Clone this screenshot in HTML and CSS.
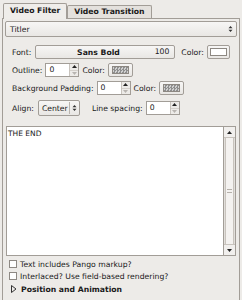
FILE: index.html
```html
<!DOCTYPE html>
<html lang="en">
<head>
    <meta charset="UTF-8">
    <title>Video Filter - Titler</title>
    <link rel="stylesheet" href="styles.css">
</head>
<body>
    <div class="tabs">
        <div class="tab active">Video Filter</div>
        <div class="tab">Video Transition</div>
    </div>

    <div class="panel">
        <div class="combo filter-combo">
            <span class="combo-text">Titler</span>
            <span class="combo-arrows">
                <svg width="5" height="8" viewBox="0 0 5 8"><path d="M0.5 3.2 L2.5 1 L4.5 3.2 Z M0.5 4.8 L2.5 7 L4.5 4.8 Z" fill="#333"/></svg>
            </span>
        </div>

        <div class="row">
            <span class="label">Font:</span>
            <div class="font-button">
                <span class="font-name">Sans Bold</span>
                <span class="font-size">100</span>
            </div>
            <span class="label color-label">Color:</span>
            <span class="swatch-btn wide-swatch"><span class="swatch white"></span></span>
        </div>

        <div class="row">
            <span class="label">Outline:</span>
            <div class="spin">
                <span class="spin-value">0</span>
                <span class="spin-buttons">
                    <span class="spin-up">
                        <svg width="5" height="3" viewBox="0 0 5 3"><path d="M0 3 L2.5 0 L5 3 Z" fill="#222"/></svg>
                    </span>
                    <span class="spin-down">
                        <svg width="5" height="3" viewBox="0 0 5 3"><path d="M0 0 L2.5 3 L5 0 Z" fill="#b8b4b0"/></svg>
                    </span>
                </span>
            </div>
            <span class="label">Color:</span>
            <span class="swatch-btn"><span class="swatch checker"></span></span>
        </div>

        <div class="row">
            <span class="label">Background Padding:</span>
            <div class="spin">
                <span class="spin-value">0</span>
                <span class="spin-buttons">
                    <span class="spin-up">
                        <svg width="5" height="3" viewBox="0 0 5 3"><path d="M0 3 L2.5 0 L5 3 Z" fill="#222"/></svg>
                    </span>
                    <span class="spin-down">
                        <svg width="5" height="3" viewBox="0 0 5 3"><path d="M0 0 L2.5 3 L5 0 Z" fill="#b8b4b0"/></svg>
                    </span>
                </span>
            </div>
            <span class="label">Color:</span>
            <span class="swatch-btn"><span class="swatch checker"></span></span>
        </div>

        <div class="row align-row">
            <span class="label">Align:</span>
            <div class="combo align-combo">
                <span class="combo-text">Center</span>
                <span class="combo-sep"></span>
                <span class="combo-arrows">
                    <svg width="5" height="8" viewBox="0 0 5 8"><path d="M0.5 3.2 L2.5 1 L4.5 3.2 Z M0.5 4.8 L2.5 7 L4.5 4.8 Z" fill="#333"/></svg>
                </span>
            </div>
            <span class="label spacing-label">Line spacing:</span>
            <div class="spin">
                <span class="spin-value">0</span>
                <span class="spin-buttons">
                    <span class="spin-up">
                        <svg width="5" height="3" viewBox="0 0 5 3"><path d="M0 3 L2.5 0 L5 3 Z" fill="#222"/></svg>
                    </span>
                    <span class="spin-down">
                        <svg width="5" height="3" viewBox="0 0 5 3"><path d="M0 0 L2.5 3 L5 0 Z" fill="#b8b4b0"/></svg>
                    </span>
                </span>
            </div>
        </div>

        <div class="text-box">
            <div class="text-content">THE END</div>
            <div class="scrollbar">
                <span class="scroll-arrow">
                    <svg width="5" height="3" viewBox="0 0 5 3"><path d="M0 3 L2.5 0 L5 3 Z" fill="#222"/></svg>
                </span>
                <span class="scroll-thumb"><span class="grip"></span></span>
                <span class="scroll-arrow">
                    <svg width="5" height="3" viewBox="0 0 5 3"><path d="M0 0 L2.5 3 L5 0 Z" fill="#222"/></svg>
                </span>
            </div>
        </div>

        <label class="check"><span class="box"></span>Text includes Pango markup?</label>
        <label class="check"><span class="box"></span>Interlaced? Use field-based rendering?</label>

        <div class="expander">
            <svg width="6" height="8" viewBox="0 0 6 8"><path d="M0.5 0.5 L5 4 L0.5 7.5 Z" fill="none" stroke="#333" stroke-width="1"/></svg>
            <span>Position and Animation</span>
        </div>
    </div>
</body>
</html>
```

FILE: styles.css
```css
* {
    margin: 0;
    padding: 0;
    box-sizing: border-box;
}

body {
    width: 242px;
    height: 300px;
    overflow: hidden;
    background-color: #edebe8;
    font-family: "DejaVu Sans", sans-serif;
    font-size: 7.7px;
    color: #1a1a1a;
}

.tabs {
    display: flex;
    align-items: flex-end;
    padding: 3px 0 0 3px;
    height: 18px;
}

.tab {
    height: 13px;
    line-height: 12px;
    padding: 0 6px;
    border: 1px solid #a29d97;
    border-bottom: none;
    border-radius: 2px 2px 0 0;
    font-weight: bold;
    background-color: #e4e1dd;
    white-space: nowrap;
}

.tab.active {
    height: 16px;
    line-height: 14px;
    padding: 0 6px;
    background-color: #efedea;
    margin-bottom: -1px;
    position: relative;
    z-index: 1;
}

.panel {
    margin: 0 2px;
    height: 282px;
    border: 1px solid #a29d97;
    border-bottom: none;
    padding: 2px 2px 0 2px;
}

.combo {
    display: flex;
    align-items: center;
    height: 16px;
    border: 1px solid #a29d97;
    border-radius: 2px;
    background: linear-gradient(#f7f6f5, #e9e7e4);
}

.combo-text {
    flex: 1;
    padding-left: 4px;
}

.combo-arrows {
    display: flex;
    align-items: center;
    padding: 0 3px;
}

.combo-sep {
    width: 1px;
    height: 12px;
    background-color: #b9b4ae;
}

.row {
    display: flex;
    align-items: center;
    gap: 3px;
    height: 14px;
    padding-left: 7px;
    margin-top: 4px;
}

.filter-combo + .row {
    margin-top: 8px;
}

.label {
    white-space: nowrap;
}

.color-label {
    margin-left: 3px;
}

.font-button {
    display: flex;
    align-items: center;
    width: 140px;
    height: 14px;
    margin-left: 1px;
    border: 1px solid #a29d97;
    border-radius: 2px;
    background: linear-gradient(#f7f6f5, #e9e7e4);
}

.font-name {
    flex: 1;
    text-align: center;
    font-weight: bold;
    padding-left: 10px;
}

.font-size {
    padding: 0 5px 0 4px;
    line-height: 12px;
}

.swatch-btn {
    display: flex;
    align-items: center;
    justify-content: center;
    width: 25px;
    height: 14px;
    border: 1px solid #a29d97;
    border-radius: 2px;
    background: linear-gradient(#f7f6f5, #e9e7e4);
}

.wide-swatch {
    width: 23px;
}

.swatch {
    width: 17px;
    height: 8px;
    border: 1px solid #8d8882;
}

.swatch.white {
    background-color: #fff;
}

.swatch.checker {
    background-color: #cfcfcf;
    background-image: conic-gradient(#8e8e8e 25%, #cfcfcf 0 50%, #8e8e8e 0 75%, #cfcfcf 0);
    background-size: 3px 3px;
}

.spin {
    display: flex;
    width: 34px;
    height: 14px;
    border: 1px solid #a29d97;
    background-color: #fff;
}

.spin-value {
    flex: 1;
    padding-left: 3px;
    line-height: 12px;
}

.spin-buttons {
    display: flex;
    flex-direction: column;
    width: 9px;
    border-left: 1px solid #c8c3bd;
    background-color: #edebe8;
}

.spin-up,
.spin-down {
    flex: 1;
    display: flex;
    align-items: center;
    justify-content: center;
}

.spin-up {
    border-bottom: 1px solid #d4d0cb;
}

.align-row {
    height: 16px;
    margin-top: 5px;
}

.align-combo {
    width: 42px;
    margin-left: 1px;
}

.align-combo .combo-text {
    padding-left: 3px;
}

.align-combo .combo-arrows {
    padding: 0 2px;
}

.spacing-label {
    margin-left: 9px;
}

.text-box {
    display: flex;
    height: 130px;
    margin: 10px 1px 0 1px;
    border: 1px solid #a29d97;
    background-color: #fff;
}

.text-content {
    flex: 1;
    padding: 2px 1px;
    line-height: 10px;
    font-size: 7.5px;
}

.scrollbar {
    display: flex;
    flex-direction: column;
    width: 12px;
    border-left: 1px solid #a29d97;
    background-color: #e2dfdb;
}

.scroll-arrow {
    display: flex;
    align-items: center;
    justify-content: center;
    height: 11px;
    background-color: #f1efed;
    border-bottom: 1px solid #c8c3bd;
}

.scroll-arrow:last-child {
    border-bottom: none;
    border-top: 1px solid #c8c3bd;
}

.scroll-thumb {
    flex: 1;
    display: flex;
    align-items: center;
    justify-content: center;
    margin: 0 1px;
    border-left: 1px solid #c8c3bd;
    border-right: 1px solid #c8c3bd;
    background-color: #f4f2f0;
}

.grip {
    width: 5px;
    height: 4px;
    border-top: 1px solid #b5b0aa;
    border-bottom: 1px solid #b5b0aa;
}

.check {
    display: flex;
    align-items: center;
    gap: 3px;
    height: 12px;
    padding-left: 4px;
}

.text-box + .check {
    margin-top: 2px;
}

.box {
    width: 8px;
    height: 8px;
    border: 1px solid #8e8984;
    background-color: #fff;
}

.expander {
    display: flex;
    align-items: center;
    gap: 4px;
    height: 14px;
    padding-left: 6px;
    font-weight: bold;
}
```
